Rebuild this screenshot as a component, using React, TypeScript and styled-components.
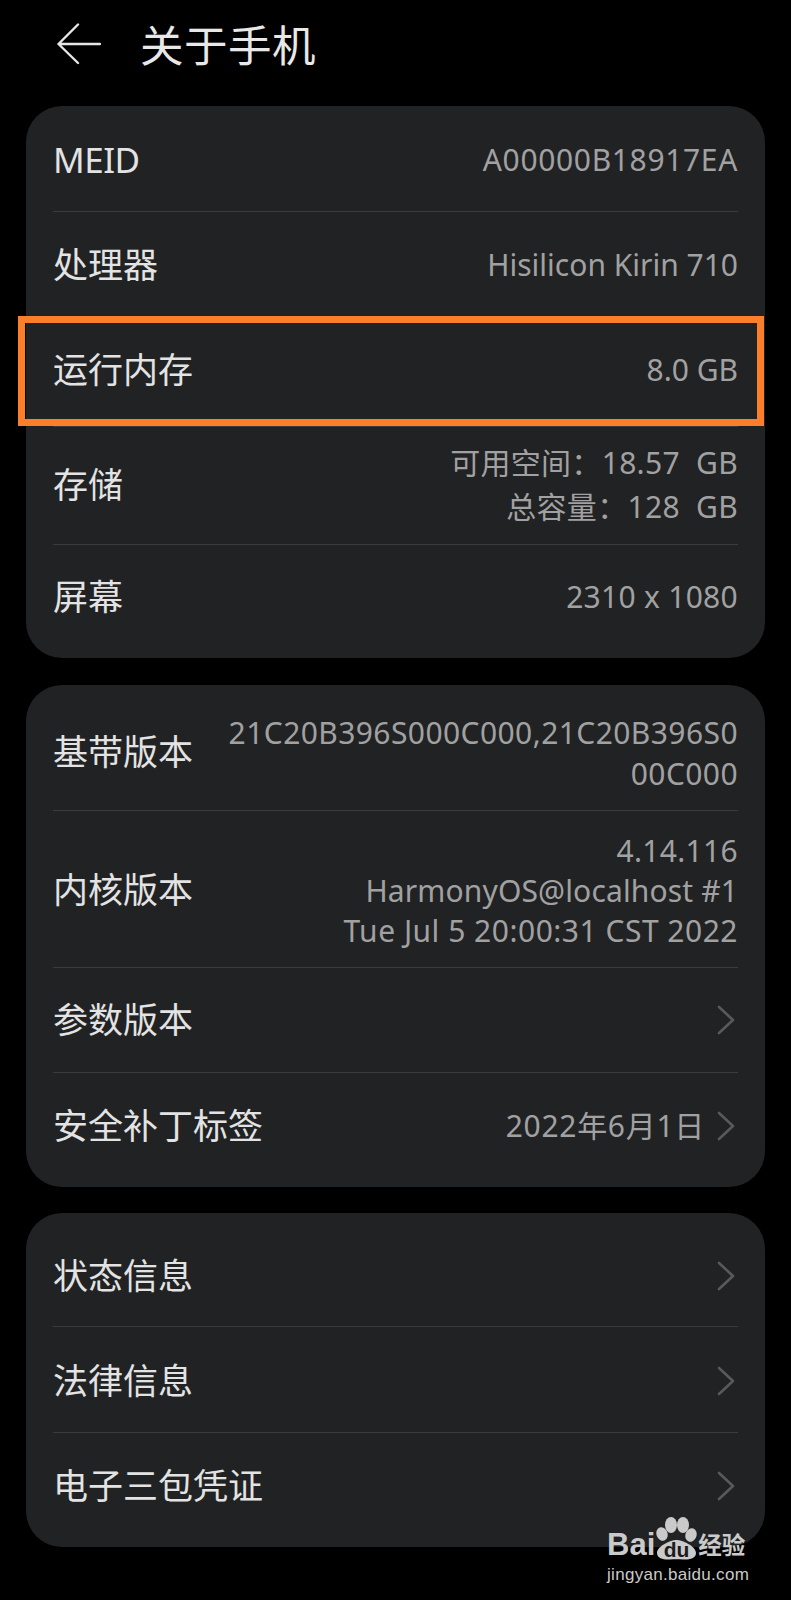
import React from "react";
import styled, { createGlobalStyle } from "styled-components";

const Global = createGlobalStyle`
  html, body { margin: 0; padding: 0; background: #000; }
  #root { width: 791px; height: 1600px; overflow: hidden; }
`;
const FONT = `"Noto Sans", "Noto Sans CJK SC", sans-serif`;

const Page = styled.div`
  position: relative;
  width: 791px;
  height: 1600px;
  background: #000;
  font-family: ${FONT};
  box-sizing: border-box;
  padding: 0 26px;
`;
const Header = styled.header`
  height: 106px;
  display: flex;
  align-items: flex-start;
  margin-left: 31px;
`;
const Back = styled.svg`
  width: 44px;
  height: 42px;
  margin-top: 23px;
`;
const Title = styled.h1`
  margin: 18px 0 0 39px;
  font-size: 43.5px;
  line-height: 54px;
  font-weight: 400;
  color: #e8e8e8;
  letter-spacing: 0.5px;
`;
const Card = styled.section<{ $mb: number }>`
  background: #212224;
  border-radius: 36px;
  padding: 0 27px;
  margin-bottom: ${(p) => p.$mb}px;
`;
const Row = styled.div<{ $h: number; $pt?: number; $pb?: number; $line?: boolean }>`
  box-sizing: border-box;
  height: ${(p) => p.$h}px;
  padding: ${(p) => p.$pt ?? 0}px 0 ${(p) => p.$pb ?? 0}px;
  display: flex;
  align-items: center;
  justify-content: space-between;
  border-bottom: ${(p) => (p.$line === false ? "none" : "1px solid #3a3b3d")};
`;
const Label = styled.span<{ $ls?: number }>`
  font-size: 35px;
  line-height: 44px;
  letter-spacing: ${(p) => p.$ls ?? 0}px;
  color: #e3e3e3;
  white-space: nowrap;
  flex: none;
`;
const Value = styled.div<{ $ls?: number }>`
  font-size: 30px;
  line-height: 40px;
  letter-spacing: ${(p) => p.$ls ?? 0}px;
  color: #a1a1a1;
  text-align: right;
  white-space: nowrap;
  display: flex;
  align-items: center;
`;
const Line = styled.div<{ $lh: number; $ls?: number }>`
  font-size: 30px;
  line-height: ${(p) => p.$lh}px;
  letter-spacing: ${(p) => p.$ls ?? 0}px;
  color: #a1a1a1;
  text-align: right;
  white-space: pre;
`;
const Stack = styled.div<{ $mt?: number }>`
  display: flex;
  flex-direction: column;
  margin-top: ${(p) => p.$mt ?? 0}px;
`;
const Chevron = styled.svg`
  width: 20px;
  height: 30px;
  flex: none;
  margin: 0 2px 0 11px;
`;
const Highlight = styled.div`
  position: absolute;
  left: 18px;
  top: 316px;
  width: 746px;
  height: 110px;
  box-sizing: border-box;
  border: 7px solid #fb7f2b;
`;
const Mark = styled.div`
  position: absolute;
  left: 607px;
  top: 1516px;
  width: 146px;
  height: 70px;
  color: #cacaca;
  font-family: "Liberation Sans", "Noto Sans CJK SC", sans-serif;
`;
const MarkTop = styled.div`
  display: flex;
  align-items: flex-end;
  height: 44px;
  font-size: 31px;
  font-weight: 700;
  line-height: 30px;
`;
const Paw = styled.svg`
  width: 43px;
  height: 44px;
  flex: none;
`;
const MarkCn = styled.span`
  font-size: 23.5px;
  line-height: 28px;
  font-weight: 700;
`;
const MarkUrl = styled.div`
  font-size: 17px;
  line-height: 20px;
  letter-spacing: 0.3px;
  margin-top: 5px;
`;
const PawText = styled.text`
  font-family: "Liberation Sans", sans-serif;
  font-size: 21px;
  font-weight: 700;
  fill: #1c1c1c;
`;

const Arrow = () => (
  <Chevron viewBox="0 0 20 30" fill="none" stroke="#58595b" strokeWidth="2.6" strokeLinecap="round" strokeLinejoin="round">
    <path d="M3 2 L17 15 L3 28" />
  </Chevron>
);

export default function App() {
  return (
    <Page>
      <Global />
      <Header>
        <Back viewBox="0 0 44 42" fill="none" stroke="#e6e6e6" strokeWidth="2.4" strokeLinecap="round" strokeLinejoin="round">
          <path d="M1.5 21 H43 M21 1.5 L1.5 21 L21 40" />
        </Back>
        <Title>关于手机</Title>
      </Header>

      <Card $mb={27}>
        <Row $h={106} $pt={2}>
          <Label $ls={-0.5}>MEID</Label>
          <Value $ls={0.65}>A00000B18917EA</Value>
        </Row>
        <Row $h={105} $pt={2}>
          <Label>处理器</Label>
          <Value>Hisilicon Kirin 710</Value>
        </Row>
        <Row $h={110} $pb={3}>
          <Label>运行内存</Label>
          <Value>8.0 GB</Value>
        </Row>
        <Row $h={118} $pb={2}>
          <Label>存储</Label>
          <Stack>
            <Line $lh={44} $ls={0.3}>可用空间：18.57  GB</Line>
            <Line $lh={44} $ls={0.3}>总容量：128  GB</Line>
          </Stack>
        </Row>
        <Row $h={113} $pb={9} $line={false}>
          <Label>屏幕</Label>
          <Value $ls={0.28}>2310 x 1080</Value>
        </Row>
      </Card>

      <Card $mb={26}>
        <Row $h={126} $pt={8}>
          <Label>基带版本</Label>
          <Stack $mt={2}>
            <Line $lh={41} $ls={0.42}>21C20B396S000C000,21C20B396S0</Line>
            <Line $lh={41} $ls={0.42}>00C000</Line>
          </Stack>
        </Row>
        <Row $h={157} $pt={2}>
          <Label>内核版本</Label>
          <Stack $mt={2}>
            <Line $lh={40} $ls={0.3}>4.14.116</Line>
            <Line $lh={40} $ls={0.14}>HarmonyOS@localhost #1</Line>
            <Line $lh={40} $ls={0.5}>Tue Jul 5 20:00:31 CST 2022</Line>
          </Stack>
        </Row>
        <Row $h={105}>
          <Label>参数版本</Label>
          <Arrow />
        </Row>
        <Row $h={114} $pb={8} $line={false}>
          <Label>安全补丁标签</Label>
          <Value $ls={0.7}>2022年6月1日<Arrow /></Value>
        </Row>
      </Card>

      <Card $mb={0}>
        <Row $h={114} $pt={12}>
          <Label>状态信息</Label>
          <Arrow />
        </Row>
        <Row $h={106} $pt={2}>
          <Label>法律信息</Label>
          <Arrow />
        </Row>
        <Row $h={114} $pb={8} $line={false}>
          <Label>电子三包凭证</Label>
          <Arrow />
        </Row>
      </Card>

      <Highlight />
      <Mark>
        <MarkTop>
          <span>Bai</span>
          <Paw viewBox="0 0 43 44" fill="#cacaca">
            <ellipse cx="16" cy="9" rx="6" ry="8" />
            <ellipse cx="28" cy="9" rx="6" ry="8" />
            <ellipse cx="7" cy="18" rx="5.5" ry="7" transform="rotate(-20 7 18)" />
            <ellipse cx="36" cy="19" rx="5.5" ry="7" transform="rotate(20 36 19)" />
            <path d="M21.5 24 C27 24 41 30 41 37 C41 43 33 44 28 43.5 C24 43 19 43 15 43.5 C10 44 2 43 2 37 C2 30 16 24 21.5 24 Z" />
            <PawText x="21.5" y="41" textAnchor="middle">du</PawText>
          </Paw>
          <MarkCn>经验</MarkCn>
        </MarkTop>
        <MarkUrl>jingyan.baidu.com</MarkUrl>
      </Mark>
    </Page>
  );
}
